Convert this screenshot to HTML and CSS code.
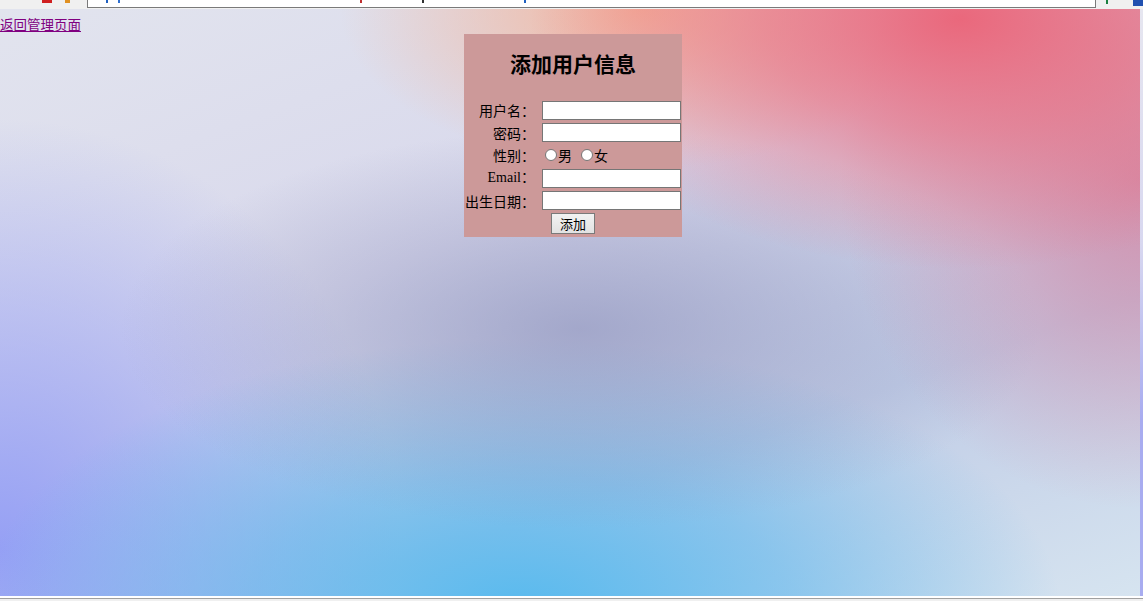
FILE: index.html
```html
<!DOCTYPE html>
<html lang="zh">
<head>
<meta charset="utf-8">
<title>添加用户信息</title>
<link rel="stylesheet" href="styles.css">
</head>
<body>
<div class="chrome">
  <span class="ico ico-red"></span>
  <span class="ico ico-org"></span>
  <div class="addr">
    <span class="frag f1"></span><span class="frag f2"></span><span class="frag f3"></span><span class="frag f4"></span><span class="frag f5"></span>
  </div>
  <span class="ico ico-grn"></span>
  <span class="ico ico-blu"></span>
</div>
<div class="main">
  <div class="page">
    <div class="backline"><a class="back" href="#">返回管理页面</a></div>
    <div class="box">
      <h2 class="title">添加用户信息</h2>
      <form class="form">
        <label class="lbl">用户名：</label><div class="fld"><input class="txt" type="text"></div>
        <label class="lbl">密码：</label><div class="fld"><input class="txt" type="password"></div>
        <label class="lbl">性别：</label><div class="fld radios"><span class="radio"></span><span>男</span><span class="radio r2"></span><span>女</span></div>
        <label class="lbl lbl-en">Email：</label><div class="fld"><input class="txt" type="text"></div>
        <label class="lbl">出生日期：</label><div class="fld"><input class="txt" type="text"></div>
        <div class="btnrow"><button class="btn" type="button">添加</button></div>
      </form>
    </div>
  </div>
  <div class="edge"></div>
</div>
<div class="foot"></div>
</body>
</html>
```
FILE: styles.css
```css
html, body {
  margin: 0;
  padding: 0;
}
body {
  width: 1143px;
  height: 601px;
  overflow: hidden;
  background: #f0f0f0;
  font-family: "Liberation Serif", "Noto Sans CJK SC", serif;
  font-size: 14px;
  color: #000;
}
.chrome {
  height: 9px;
  display: flex;
  align-items: flex-start;
  background: #f0f0f0;
  position: relative;
}
.addr {
  margin-left: 87px;
  width: 1007px;
  height: 7px;
  background: #fff;
  border-left: 1px solid #7a7a7a;
  border-right: 1px solid #7a7a7a;
  border-bottom: 1px solid #7a7a7a;
  display: flex;
}
.frag { display: block; height: 3px; width: 2px; background: #2060c0; }
.f1 { margin-left: 18px; }
.f2 { margin-left: 10px; background: #3070d0; }
.f3 { margin-left: 240px; background: #c03030; }
.f4 { margin-left: 60px; background: #303030; }
.f5 { margin-left: 100px; background: #2060c0; }
.ico { position: absolute; top: 0; height: 3px; }
.ico-red { left: 42px; width: 10px; background: #d02020; }
.ico-org { left: 65px; width: 5px; background: #e09020; }
.ico-grn { left: 1106px; width: 2px; height: 4px; background: #1a8040; }
.ico-blu { left: 1133px; width: 10px; height: 6px; background: #2050b0; }

.main {
  display: flex;
  height: 587px;
}
.page {
  width: 1140px;
  height: 587px;
  overflow: hidden;
  background:
    radial-gradient(ellipse 430px 250px at 960px 10px, rgba(234,104,124,1) 0%, rgba(234,110,128,0.65) 45%, rgba(234,110,128,0) 100%),
    radial-gradient(ellipse 300px 160px at 640px 0px, rgba(244,180,152,0.95) 0%, rgba(244,180,152,0) 100%),
    radial-gradient(ellipse 300px 330px at 1140px 170px, rgba(214,122,152,0.75) 0%, rgba(214,122,152,0) 100%),
    radial-gradient(ellipse 460px 200px at 580px 320px, rgba(140,144,186,0.65) 0%, rgba(140,144,186,0) 100%),
    radial-gradient(ellipse 540px 270px at 520px 600px, rgba(88,186,238,1) 0%, rgba(95,185,238,0.6) 50%, rgba(95,185,238,0) 100%),
    radial-gradient(ellipse 400px 430px at 0px 540px, rgba(150,160,245,1) 0%, rgba(150,160,245,0) 100%),
    linear-gradient(160deg, #e2e4ee 0%, #d8d8ec 40%, #c0cce6 70%, #d6e4f0 100%);
}
.edge {
  width: 3px;
  height: 587px;
  background: linear-gradient(180deg, #e6e6f0 0%, #d8d8f0 40%, #a8acf0 70%, #a8acf0 100%);
}
.foot {
  height: 6px;
  background: linear-gradient(180deg, #ffffff 0, #ffffff 2px, #a0a0a0 2px, #a0a0a0 3px, #f0f0f0 3px);
}

.backline {
  padding-top: 5px;
  height: 20px;
  line-height: 20px;
}
.back {
  color: #800080;
  text-decoration: underline;
  font-family: "Noto Sans CJK SC", sans-serif;
  font-size: 13.5px;
}
.box {
  margin-left: 464px;
  width: 218px;
  height: 203px;
  background: #cc9999;
  box-sizing: border-box;
  padding-top: 16px;
}
.title {
  margin: 0;
  height: 26px;
  line-height: 26px;
  text-align: center;
  font-size: 21px;
  font-weight: bold;
  font-family: "Noto Sans CJK SC", serif;
}
.form {
  margin: 23px 0 0 0;
  display: grid;
  grid-template-columns: 71px 139px;
  column-gap: 7px;
  grid-auto-rows: 22.6px;
  align-items: center;
}
.lbl {
  text-align: right;
  white-space: nowrap;
  font-family: "Noto Sans CJK SC", sans-serif;
  font-size: 14px;
  line-height: 18px;
}
.lbl-en {
  font-family: "Liberation Serif", "Noto Sans CJK SC", serif;
}
.fld {
  display: flex;
  align-items: center;
  height: 22.6px;
}
.txt {
  box-sizing: border-box;
  width: 139px;
  height: 19px;
  margin: 0;
  padding: 0 2px;
  border: 1px solid #767676;
  background: #fff;
}
.radios {
  font-family: "Noto Sans CJK SC", sans-serif;
  font-size: 14px;
}
.radio {
  box-sizing: border-box;
  display: inline-block;
  width: 12px;
  height: 12px;
  border: 1px solid #767676;
  border-radius: 50%;
  background: #fff;
  margin: 0 1px 0 3px;
}
.r2 { margin-left: 9px; }
.btnrow {
  grid-column: 1 / 3;
  display: flex;
  padding-left: 87px;
  align-items: center;
}
.btn {
  box-sizing: border-box;
  width: 44px;
  height: 21px;
  margin: 0;
  padding: 0;
  border: 1px solid #7a7a7a;
  background: linear-gradient(180deg, #f2f2f2, #e2e2e2);
  font-family: "Noto Sans CJK SC", sans-serif;
  font-size: 13px;
  line-height: 19px;
  color: #000;
}
```
